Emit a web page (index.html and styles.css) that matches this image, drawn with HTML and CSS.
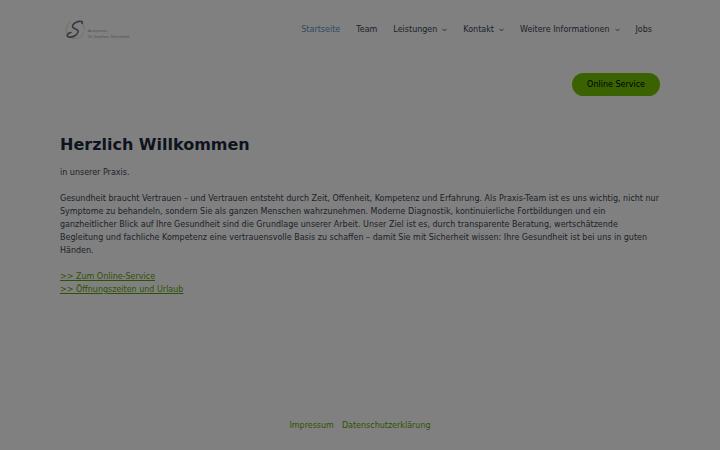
FILE: index.html
```html
<!DOCTYPE html>
<html lang="de">
<head>
  <meta charset="UTF-8" />
  <meta name="viewport" content="width=device-width, initial-scale=1.0"/>
  <title>Herzlich Willkommen</title>
  <link rel="stylesheet" href="styles.css">
</head>
<body>

  <header class="site-header container">
    <a href="#" class="logo">
      <svg class="logo-mark" viewBox="0 0 22 22" aria-hidden="true">
        <path d="M6 3C1.500 6 .5 11 2 15c1.500 3.500 5 6 9.500 5.500 4-.5 7-3 8-6.500M16 3c3 2 4.500 5 4 8" fill="none" stroke="#6b6f5c" stroke-width=".9"/>
        <path d="M18 4.500c.8-1.700-.8-2.500-3.500-2C10.500 3.300 7 6 8 8.500c.8 1.800 5.500 1.800 5.800 4.300.3 3-4.300 6.200-8.300 6.200-3 0-4-1.500-2.500-3.200.9-1 2-1.500 3.200-1.600" fill="none" stroke="#35383f" stroke-width="1.700" stroke-linecap="round"/>
      </svg>
      <span class="logo-text">Arztpraxis<br>Dr. Stephan Schönfeld</span>
    </a>
    <nav>
      <ul class="menu">
        <li><a href="#" class="active">Startseite</a></li>
        <li><a href="#">Team</a></li>
        <li><a href="#">Leistungen <svg class="arrow" viewBox="0 0 6 4"><path d="M.6.6 3 3 5.400.6"/></svg></a></li>
        <li><a href="#">Kontakt <svg class="arrow" viewBox="0 0 6 4"><path d="M.6.6 3 3 5.400.6"/></svg></a></li>
        <li><a href="#">Weitere Informationen <svg class="arrow" viewBox="0 0 6 4"><path d="M.6.6 3 3 5.400.6"/></svg></a></li>
        <li><a href="#">Jobs</a></li>
      </ul>
    </nav>
  </header>

  <div class="service-bar container">
    <a href="#" class="service-button">Online Service</a>
  </div>

  <main class="container">
    <h1>Herzlich Willkommen</h1>
    <p>in unserer Praxis.</p>
    <p>Gesundheit braucht Vertrauen – und Vertrauen entsteht durch Zeit, Offenheit, Kompetenz und Erfahrung. Als Praxis-Team ist es uns wichtig, nicht nur Symptome zu behandeln, sondern Sie als ganzen Menschen wahrzunehmen. Moderne Diagnostik, kontinuierliche Fortbildungen und ein ganzheitlicher Blick auf Ihre Gesundheit sind die Grundlage unserer Arbeit. Unser Ziel ist es, durch transparente Beratung, wertschätzende Begleitung und fachliche Kompetenz eine vertrauensvolle Basis zu schaffen – damit Sie mit Sicherheit wissen: Ihre Gesundheit ist bei uns in guten Händen.</p>
    <p class="links">
      <a href="#">&gt;&gt; Zum Online-Service</a><br>
      <a href="#">&gt;&gt; Öffnungszeiten und Urlaub</a>
    </p>
  </main>

  <footer class="site-footer">
    <a href="#">Impressum</a>
    <a href="#">Datenschutzerklärung</a>
  </footer>

</body>
</html>
```
FILE: styles.css
```css
* {
  box-sizing: border-box;
}

body {
  margin: 0;
  min-height: 100vh;
  display: flex;
  flex-direction: column;
  font-family: "DejaVu Sans", sans-serif;
  font-size: 8px;
  line-height: 13px;
  color: #1a1f28;
  background: #808080;
}

a {
  color: #2f5200;
}

.container {
  width: 100%;
  max-width: 640px;
  margin: 0 auto;
  padding: 0 20px;
}

.site-header {
  display: flex;
  align-items: center;
  justify-content: space-between;
  height: 59px;
}

.logo {
  display: flex;
  align-items: center;
  gap: 2px;
  padding-left: 5px;
  text-decoration: none;
}

.logo-mark {
  width: 21px;
  height: 21px;
}

.logo-text {
  padding-top: 8px;
  font-family: "Noto Sans", sans-serif;
  font-size: 4px;
  line-height: 6px;
  color: #505050;
}

.menu {
  display: flex;
  gap: 16px;
  margin: 0;
  padding: 0 8px 0 0;
  list-style: none;
}

.menu a {
  display: flex;
  align-items: center;
  gap: 5px;
  color: #1a1f28;
  text-decoration: none;
}

.menu .active {
  color: #30495f;
}

.arrow {
  width: 5px;
  height: 4px;
  fill: none;
  stroke: currentColor;
}

.service-bar {
  display: flex;
  justify-content: flex-end;
  padding-top: 14px;
}

.service-button {
  padding: 5px 15px;
  border-radius: 12px;
  background: #3b6200;
  color: #000;
  text-decoration: none;
}

main {
  flex: 1;
}

h1 {
  margin: 38px 0 10px;
  font-size: 16px;
  line-height: 22px;
  color: #0e131d;
}

p {
  margin: 0 0 13px;
}

.site-footer {
  display: flex;
  justify-content: center;
  gap: 8px;
  padding: 18px 20px;
}

.site-footer a {
  text-decoration: none;
}
```
